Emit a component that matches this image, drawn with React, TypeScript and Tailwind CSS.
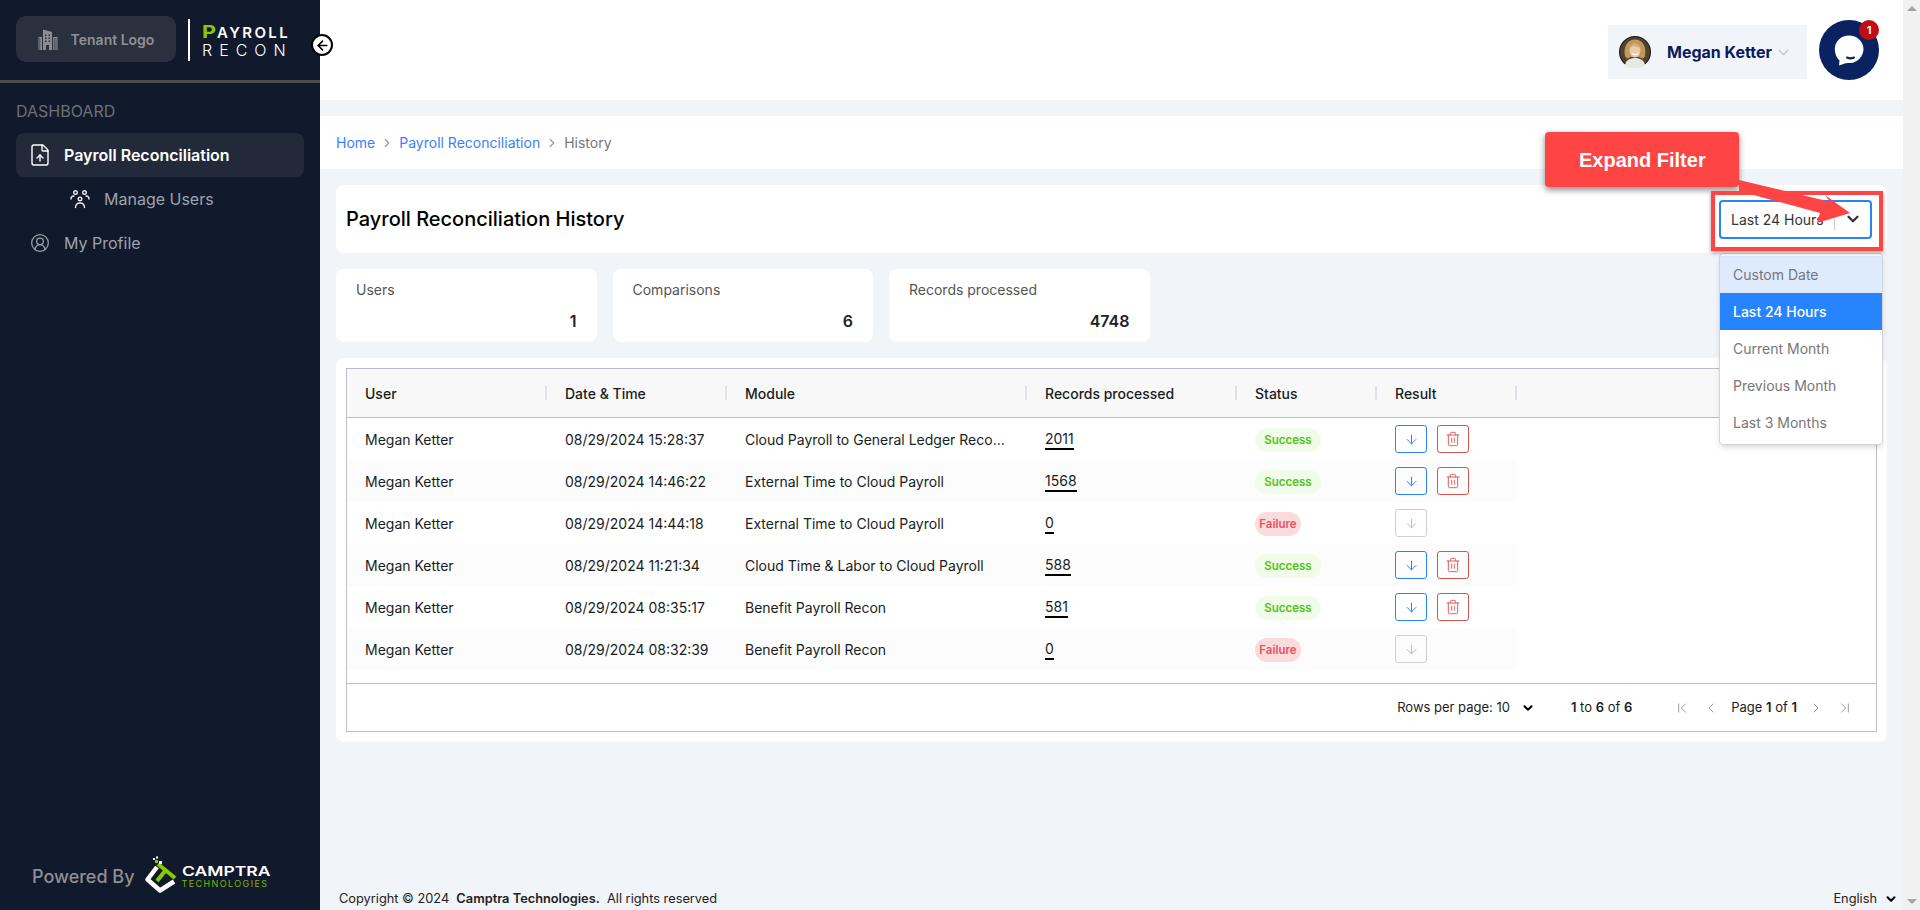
import {
  ArrowDown,
  ArrowLeft,
  ChevronDown,
  ChevronFirst,
  ChevronLast,
  ChevronLeft,
  ChevronRight,
  CircleUserRound,
  FileUp,
  Trash2,
} from "lucide-react";

const rows = [
  { date: "08/29/2024 15:28:37", module: "Cloud Payroll to General Ledger Reco...", records: "2011", ok: true },
  { date: "08/29/2024 14:46:22", module: "External Time to Cloud Payroll", records: "1568", ok: true },
  { date: "08/29/2024 14:44:18", module: "External Time to Cloud Payroll", records: "0", ok: false },
  { date: "08/29/2024 11:21:34", module: "Cloud Time & Labor to Cloud Payroll", records: "588", ok: true },
  { date: "08/29/2024 08:35:17", module: "Benefit Payroll Recon", records: "581", ok: true },
  { date: "08/29/2024 08:32:39", module: "Benefit Payroll Recon", records: "0", ok: false },
];

const columns = ["User", "Date & Time", "Module", "Records processed", "Status", "Result"];
const stats = [
  { label: "Users", value: "1" },
  { label: "Comparisons", value: "6" },
  { label: "Records processed", value: "4748" },
];
const options = ["Custom Date", "Last 24 Hours", "Current Month", "Previous Month", "Last 3 Months"];

function BuildingIcon() {
  return (
    <svg width="20" height="21" viewBox="0 0 20 21" fill="#8b8d93">
      <path d="M5 0.500 14 3V21H5z" />
      <path d="M0.500 8H4V21H0.500zM15 8h4.500V21H15z" />
      <path d="M1.800 9v12M16.300 9v12M18 9v12" stroke="#2a303e" strokeWidth="0.700" />
      <path d="M7 5.500h1.500V7H7zM10.500 5.500H12V7h-1.500zM7 8.500h1.500V10H7zM10.500 8.500H12V10h-1.500zM7 11.500h1.500V13H7zM10.500 11.500H12V13h-1.500zM8 16h3v5H8z" fill="#2a303e" />
    </svg>
  );
}

function UsersIcon() {
  return (
    <svg width="20" height="20" viewBox="0 0 20 20" fill="none" stroke="#e5e7eb" strokeWidth="1.400" strokeLinecap="round">
      <circle cx="5.500" cy="3.500" r="1.800" />
      <circle cx="14.500" cy="3.500" r="1.800" />
      <circle cx="10" cy="10" r="1.800" />
      <path d="M1 10c0-2 1.300-3 3-3M19 10c0-2-1.300-3-3-3M5.500 18.500c0-3 2-4.500 4.500-4.500s4.500 1.500 4.500 4.500" />
    </svg>
  );
}

function Avatar() {
  return (
    <svg width="32" height="32" viewBox="0 0 32 32" className="shrink-0">
      <circle cx="16" cy="16" r="16" fill="#151515" />
      <circle cx="16" cy="16" r="15" fill="#4f4330" />
      <path d="M6 29c1-5 5-7 10-7s9 2 10 7a15 15 0 0 1-20 0z" fill="#e8e8e2" />
      <path d="M6 20C4 10 9 3.500 16 3.500S28 10 26 20c-1 3-4 3-5 1H11c-1 2-4 2-5-1z" fill="#bd9a5a" />
      <ellipse cx="16" cy="14.500" rx="5.500" ry="7" fill="#edc7aa" />
      <path d="M10.500 12c1-3 4-4.500 5.500-4.500s4.500 1.500 5.500 4.500c-3-1-6-2-7-2.500-1 1-2.500 2-4 2.500z" fill="#d0ae6c" />
      <path d="M13 17.500c2 1.500 4 1.500 6 0" stroke="#fff" strokeWidth="1.200" fill="none" />
    </svg>
  );
}

function ChatIcon() {
  return (
    <svg width="60" height="60" viewBox="0 0 60 60">
      <circle cx="30" cy="30" r="30" fill="#0b2260" />
      <path d="M30 15.500c8 0 14.500 6 14.500 13.500S38 43 31.500 43c-2 0-3.500 0-5 .3L20 45.500l.5-5C17.500 38 15.800 33.500 15.800 29c0-7.500 6.200-13.500 14.200-13.500z" fill="#fff" />
      <path d="M28 37.500c2 1 5 1 7 0" stroke="#0b2260" strokeWidth="2" strokeLinecap="round" fill="none" />
    </svg>
  );
}

function CamptraMark() {
  return (
    <svg width="34" height="38" viewBox="0 0 34 38" className="shrink-0">
      <path d="M14 11 4.500 23.500 17 34.500 31 25.500" fill="none" stroke="#fff" strokeWidth="4.500" strokeLinejoin="round" />
      <path d="M15 8 32 22" stroke="#8cc800" strokeWidth="4" />
      <path d="M22 15 14 25" stroke="#8cc800" strokeWidth="4" />
      <rect x="12" y="4" width="3" height="3" fill="#8cc800" />
      <rect x="13" y="0.500" width="2" height="2" fill="#fff" />
      <rect x="10" y="2" width="2" height="2" fill="#fff" />
      <rect x="16" y="5" width="3" height="3" fill="#fff" />
    </svg>
  );
}

function Sidebar() {
  return (
    <aside className="w-[320px] shrink-0 bg-[#111a2c] flex flex-col">
      <div className="h-[83px] shrink-0 border-b-[3px] border-[#4b4b48] pl-4 pt-4 flex items-start">
        <div className="w-[160px] h-[46px] rounded-[10px] bg-[#2a303e] flex items-center justify-center gap-[13px] text-[#8f9195] text-[14px] font-semibold">
          <BuildingIcon />
          <span>Tenant Logo</span>
        </div>
        <div className="w-[2px] h-[42px] bg-white ml-3 mt-[3px]" />
        <div className="ml-3 mt-[8px] text-white">
          <div className="text-[15px] leading-[16px] font-semibold tracking-[2.400px] whitespace-nowrap">
            <span className="inline-block w-[15px] text-[#8cc800] text-[18px] font-bold scale-x-[1.200] origin-left">P</span>AYROLL
          </div>
          <div className="text-[16px] leading-[17px] font-light tracking-[7px] whitespace-nowrap mt-[1px]">RECON</div>
        </div>
      </div>
      <div className="px-4 pt-[19px] text-[#6d7076] text-[16px] leading-[18px]">DASHBOARD</div>
      <div className="mx-4 mt-[13px] h-[44px] rounded-lg bg-[#222939] flex items-center pl-3 gap-3 text-white text-[16px] font-semibold">
        <FileUp size={24} strokeWidth={1.400} />
        <span>Payroll Reconciliation</span>
      </div>
      <div className="h-[44px] pl-[70px] flex items-center gap-[14px] text-[#9ca3af] text-[16px]">
        <UsersIcon />
        <span>Manage Users</span>
      </div>
      <div className="h-[44px] pl-[30px] flex items-center gap-[14px] text-[#9ca3af] text-[16px]">
        <CircleUserRound size={20} strokeWidth={1.500} />
        <span>My Profile</span>
      </div>
      <div className="mt-auto mb-[16px] pl-8 flex items-center">
        <span className="text-[#8e8f93] text-[18px] font-medium whitespace-nowrap">Powered By</span>
        <div className="ml-[8px] mt-[-2px]">
          <CamptraMark />
        </div>
        <div className="ml-[5px]">
          <div className="text-white text-[13.500px] leading-[14px] font-semibold scale-x-[1.300] origin-left whitespace-nowrap">CAMPTRA</div>
          <div className="text-[#7fb500] text-[9px] leading-[11px] tracking-[1.400px] whitespace-nowrap">TECHNOLOGIES</div>
        </div>
      </div>
    </aside>
  );
}

function TableGrid() {
  const grid = "grid grid-cols-[200px_180px_300px_210px_140px_140px] w-[1170px]";
  return (
    <div className="border border-[#babfc7] flex flex-col text-[14px] text-[#181d1f]">
      <div className="h-[49px] bg-[#f8f8f8] border-b border-[#babfc7]">
        <div className={`${grid} h-full items-center`}>
          {columns.map((col) => (
            <div key={col} className="pl-[18px] h-[14px] flex items-center border-r-2 border-[#dde2eb] font-medium whitespace-nowrap">
              {col}
            </div>
          ))}
        </div>
      </div>
      <div className="h-[265px]">
        {rows.map((row, index) => (
          <div key={row.date} className={`${grid} h-[42px] items-center ${index % 2 === 1 ? "bg-[#fcfcfc]" : ""}`}>
            <div className="pl-[18px]">Megan Ketter</div>
            <div className="pl-[18px] whitespace-nowrap">{row.date}</div>
            <div className="pl-[18px] whitespace-nowrap">{row.module}</div>
            <div className="pl-[18px]">
              <span className="border-b-2 border-black leading-[18px] inline-block">{row.records}</span>
            </div>
            <div className="pl-[18px] pt-[2px]">
              {row.ok ? (
                <span className="inline-flex items-center justify-center w-[66px] h-[24px] rounded-full bg-[#f0fbe8] text-[#52c41a] text-[11.500px] font-semibold">
                  Success
                </span>
              ) : (
                <span className="inline-flex items-center justify-center w-[46px] h-[24px] rounded-full bg-[#fbdcdd] text-[#ef5060] text-[11.500px] font-semibold">
                  Failure
                </span>
              )}
            </div>
            <div className="pl-[18px] flex gap-[10px]">
              {row.ok ? (
                <>
                  <button className="w-[32px] h-[28px] rounded-[3px] border border-[#2684ff] text-[#2684ff] flex items-center justify-center">
                    <ArrowDown size={15} strokeWidth={1.600} />
                  </button>
                  <button className="w-[32px] h-[28px] rounded-[3px] border border-[#d9534f] text-[#e0605c] flex items-center justify-center">
                    <Trash2 size={16} strokeWidth={1.500} />
                  </button>
                </>
              ) : (
                <button className="w-[32px] h-[28px] rounded-[3px] border border-[#cfcfcf] text-[#bdbdbd] flex items-center justify-center">
                  <ArrowDown size={15} strokeWidth={1.600} />
                </button>
              )}
            </div>
          </div>
        ))}
      </div>
      <div className="h-[48px] border-t border-[#babfc7] flex items-center justify-end text-[13px] pr-[23px]">
        <span>Rows per page: 10</span>
        <ChevronDown size={14} strokeWidth={3.500} className="ml-[11px] text-black" />
        <span className="ml-[36px]">
          <b className="font-semibold">1</b> to <b className="font-semibold">6</b> of <b className="font-semibold">6</b>
        </span>
        <ChevronFirst size={16} strokeWidth={1.300} className="ml-[42px] text-[#8d8d95]" />
        <ChevronLeft size={16} strokeWidth={1.300} className="ml-[13px] text-[#8d8d95]" />
        <span className="ml-[12px]">
          Page <b className="font-semibold">1</b> of <b className="font-semibold">1</b>
        </span>
        <ChevronRight size={16} strokeWidth={1.300} className="ml-[11px] text-[#8d8d95]" />
        <ChevronLast size={16} strokeWidth={1.300} className="ml-[13px] text-[#8d8d95]" />
      </div>
    </div>
  );
}

function FilterSelect() {
  return (
    <div className="relative w-[153px] h-[39px]">
      <div className="h-full rounded-[4px] border-2 border-[#2684ff] bg-white flex items-center pl-[10px] text-[14px] text-[#333]">
        <span className="whitespace-nowrap">Last 24 Hours</span>
        <div className="absolute left-[115px] top-[9px] w-px h-[21px] bg-[#ccc]" />
        <ChevronDown size={18} strokeWidth={3} className="absolute right-[10px] top-[10px] text-[#333]" />
      </div>
      <div className="absolute left-0 top-[53px] w-[164px] h-[192px] z-10 bg-white rounded-[4px] border border-[#d5d5d5] shadow-md py-[2px] text-[14px]">
        {options.map((option, index) => (
          <div
            key={option}
            className={`h-[37px] pl-[13px] flex items-center ${
              index === 0 ? "bg-[#deebff] text-[#777]" : index === 1 ? "bg-[#2684ff] text-white font-medium" : "text-[#777]"
            }`}
          >
            {option}
          </div>
        ))}
      </div>
    </div>
  );
}

function Annotation() {
  return (
    <>
      <div className="absolute left-[1545px] top-[132px] w-[194px] h-[55px] rounded-[4px] bg-[#ff4444] shadow-[0_3px_6px_rgba(0,0,0,0.45)] text-white text-[20px] font-bold font-['Liberation_Sans',sans-serif] flex items-center pl-[34px] z-20">
        Expand Filter
      </div>
      <div className="absolute left-[1711px] top-[191px] w-[172px] h-[60px] border-[4px] border-[#ff4444] shadow-[0_2px_4px_rgba(0,0,0,0.35)] z-20" />
      <svg className="absolute left-[1735px] top-[175px] z-20" width="130" height="55" viewBox="0 0 130 55">
        <path d="M4 5 95 26.700 90 20 115 38 82 48 85 38 4 16z" fill="#ff4444" />
      </svg>
    </>
  );
}

export default function App() {
  return (
    <div className="relative h-[910px] w-[1920px] overflow-hidden flex font-['Inter',sans-serif] bg-[#f1f4f9]">
      <Sidebar />
      <button className="absolute left-[311px] top-[34px] w-[22px] h-[22px] rounded-full bg-white border-2 border-black flex items-center justify-center text-black z-10">
        <ArrowLeft size={15} strokeWidth={2.500} />
      </button>

      <main className="flex-1 flex flex-col min-w-0">
        <header className="h-[100px] shrink-0 bg-white flex items-center justify-end pr-[24px]">
          <div className="w-[199px] h-[54px] bg-[#f1f4f9] flex items-center pl-[11px] mt-[4px]">
            <Avatar />
            <span className="ml-4 text-[16px] font-bold text-[#0b1a5e] whitespace-nowrap">Megan Ketter</span>
            <ChevronDown size={17} className="ml-[3px] text-[#c9ccd6]" />
          </div>
          <div className="relative ml-3">
            <ChatIcon />
            <span className="absolute right-0 top-0 w-[20px] h-[20px] rounded-full bg-[#c00f12] text-white text-[11px] font-bold flex items-center justify-center">1</span>
          </div>
        </header>

        <div className="h-[53px] shrink-0 mt-4 bg-white pl-4 flex items-center gap-[5px] text-[14px]">
          <span className="text-[#3b82f6]">Home</span>
          <ChevronRight size={14} className="text-[#999]" />
          <span className="text-[#3b82f6]">Payroll Reconciliation</span>
          <ChevronRight size={14} className="text-[#999]" />
          <span className="text-[#777]">History</span>
        </div>

        <div className="px-4 pt-4 flex flex-col gap-4">
          <div className="h-[68px] rounded-lg bg-white flex items-center justify-between pl-[10px] pr-[15px]">
            <h1 className="text-[20px] font-medium text-black">Payroll Reconciliation History</h1>
            <FilterSelect />
          </div>

          <div className="flex gap-4">
            {stats.map((stat) => (
              <div key={stat.label} className="w-[260.500px] h-[73px] rounded-lg bg-white pl-5 pr-5 pt-[12px]">
                <div className="text-[14px] leading-[18px] text-[#555]">{stat.label}</div>
                <div className="text-right text-[16px] font-semibold text-[#222] mt-[10px]">{stat.value}</div>
              </div>
            ))}
          </div>

          <div className="rounded-lg bg-white p-[10px]">
            <TableGrid />
          </div>
        </div>

        <footer className="mt-auto h-[22px] flex items-center justify-between pl-[19px] pr-[5px] text-[12.800px] text-[#222]">
          <span className="whitespace-pre">
            Copyright © 2024  <b className="font-semibold">Camptra Technologies.</b>  All rights reserved
          </span>
          <span className="flex items-center gap-[7px]">
            English
            <ChevronDown size={14} strokeWidth={3.500} className="text-black" />
          </span>
        </footer>
      </main>

      {/* scrollbar */}
      <div className="w-[17px] shrink-0 bg-[#f1f1f1] flex flex-col justify-between items-center py-[6px]">
        <div className="w-0 h-0 border-x-[5px] border-x-transparent border-b-[5px] border-b-[#a3a3a3]" />
        <div className="w-0 h-0 border-x-[5px] border-x-transparent border-t-[5px] border-t-[#a3a3a3]" />
      </div>

      <Annotation />
    </div>
  );
}
